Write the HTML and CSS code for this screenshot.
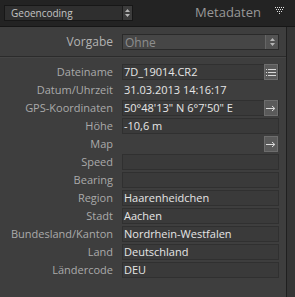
FILE: index.html
```html
<!DOCTYPE html>
<html lang="de">
<head>
    <meta charset="UTF-8">
    <title>Metadaten</title>
    <link rel="stylesheet" href="styles.css">
</head>
<body>
    <div class="topbar">
        <div class="select">
            <span>Geoencoding</span>
            <span class="spin"><svg width="7" height="10" viewBox="0 0 7 10"><path d="M3.5 1 L6 4 H1 Z M3.5 9 L6 6 H1 Z" fill="#b5b5b5"/></svg></span>
        </div>
        <div class="title">Metadaten</div>
        <svg class="tri" width="9" height="7" viewBox="0 0 9 7">
            <g fill="#e0e0e0">
                <rect x="0" y="0" width="1" height="1"/><rect x="2" y="0" width="1" height="1"/><rect x="4" y="0" width="1" height="1"/><rect x="6" y="0" width="1" height="1"/><rect x="8" y="0" width="1" height="1"/>
                <rect x="1" y="2" width="1" height="1"/><rect x="3" y="2" width="1" height="1"/><rect x="5" y="2" width="1" height="1"/><rect x="7" y="2" width="1" height="1"/>
                <rect x="2" y="4" width="1" height="1"/><rect x="4" y="4" width="1" height="1"/><rect x="6" y="4" width="1" height="1"/>
                <rect x="4" y="6" width="1" height="1"/>
            </g>
        </svg>
    </div>

    <div class="panel">
        <div class="preset">
            <div class="label big">Vorgabe</div>
            <div class="preset-field">
                <span>Ohne</span>
                <span class="spin"><svg width="7" height="10" viewBox="0 0 7 10"><path d="M3.5 1 L6 4 H1 Z M3.5 9 L6 6 H1 Z" fill="#b5b5b5"/></svg></span>
            </div>
        </div>
        <div class="sep"></div>

        <div class="fields">
            <div class="label">Dateiname</div>
            <div class="field">7D_19014.CR2
                <span class="btn"><svg width="10" height="9" viewBox="0 0 10 9"><g fill="#d8d8d8"><rect x="0" y="1" width="1" height="1"/><rect x="2" y="1" width="8" height="1"/><rect x="0" y="4" width="1" height="1"/><rect x="2" y="4" width="8" height="1"/><rect x="0" y="7" width="1" height="1"/><rect x="2" y="7" width="8" height="1"/></g></svg></span>
            </div>

            <div class="label">Datum/Uhrzeit</div>
            <div class="field plain">31.03.2013 14:16:17</div>

            <div class="label">GPS-Koordinaten</div>
            <div class="field">50°48'13" N 6°7'50" E
                <span class="btn"><svg width="10" height="7" viewBox="0 0 10 7"><path d="M0 3.5 H8.5 M6 1 L8.8 3.5 L6 6" stroke="#dcdcdc" stroke-width="1" fill="none"/></svg></span>
            </div>

            <div class="label">Höhe</div>
            <div class="field">-10,6 m</div>

            <div class="label">Map</div>
            <div class="field plain">
                <span class="btn"><svg width="10" height="7" viewBox="0 0 10 7"><path d="M0 3.5 H8.5 M6 1 L8.8 3.5 L6 6" stroke="#dcdcdc" stroke-width="1" fill="none"/></svg></span>
            </div>

            <div class="label">Speed</div>
            <div class="field"></div>

            <div class="label">Bearing</div>
            <div class="field"></div>

            <div class="label">Region</div>
            <div class="field">Haarenheidchen</div>

            <div class="label">Stadt</div>
            <div class="field">Aachen</div>

            <div class="label">Bundesland/Kanton</div>
            <div class="field">Nordrhein-Westfalen</div>

            <div class="label">Land</div>
            <div class="field">Deutschland</div>

            <div class="label">Ländercode</div>
            <div class="field">DEU</div>
        </div>
    </div>
</body>
</html>
```

FILE: styles.css
```css
body {
    margin: 0;
    width: 295px;
    height: 297px;
    overflow: hidden;
    background: #353535;
    font-family: "Open Sans", "Noto Sans", sans-serif;
}
.topbar {
    height: 26px;
    background: #232323;
    border-bottom: 1px solid #161616;
    display: flex;
    align-items: center;
    padding: 0 11px 0 4px;
}
.select {
    box-sizing: border-box;
    width: 129px;
    height: 16px;
    margin-top: -1px;
    background: #2f2f2f;
    border: 1px solid #171717;
    display: flex;
    align-items: center;
    justify-content: space-between;
    font-size: 10px;
    color: #c4c4c4;
    padding-left: 6px;
}
.spin {
    width: 9px;
    height: 14px;
    background: #3c3c3c;
    border-left: 1px solid #1c1c1c;
    display: flex;
    align-items: center;
    justify-content: center;
}
.title {
    margin-left: auto;
    font-size: 13px;
    color: #989898;
    margin-top: -2px;
}
.tri {
    margin-left: 14px;
    margin-top: -6px;
}
.panel {
    width: 286px;
    height: 270px;
    background: #3e3e3e;
    border-right: 1px solid #1f1f1f;
}
.label {
    text-align: right;
    font-size: 11px;
    color: #aaaaaa;
    line-height: 16px;
}
.label.big {
    font-size: 12px;
    color: #b3b3b3;
}
.preset {
    display: grid;
    grid-template-columns: 113px 157px;
    column-gap: 9px;
    padding-top: 7px;
}
.preset-field {
    height: 14px;
    background: #464646;
    border: 1px solid #2a2a2a;
    display: flex;
    align-items: center;
    justify-content: space-between;
    font-size: 12px;
    color: #8e8e8e;
    padding-left: 2px;
}
.preset-field .spin {
    width: 12px;
    background: #535353;
    border-left: 1px solid #666;
}
.sep {
    margin-top: 6px;
    height: 1px;
    background: #2b2b2b;
    border-bottom: 1px solid #454545;
}
.fields {
    display: grid;
    grid-template-columns: 113px 157px;
    grid-auto-rows: 16px;
    column-gap: 9px;
    row-gap: 2px;
    padding-top: 6px;
}
.field {
    box-sizing: border-box;
    height: 16px;
    background: #3a3a3a;
    border: 1px solid #303030;
    font-size: 11px;
    line-height: 14px;
    color: #e6e6e6;
    padding-left: 1px;
    display: flex;
    align-items: center;
    white-space: nowrap;
}
.field.plain {
    background: none;
    border-color: transparent;
}
.btn {
    margin-left: auto;
    width: 12px;
    height: 14px;
    background: #5a5a5a;
    border: 1px solid #6d6d6d;
    display: flex;
    align-items: center;
    justify-content: center;
}
```
